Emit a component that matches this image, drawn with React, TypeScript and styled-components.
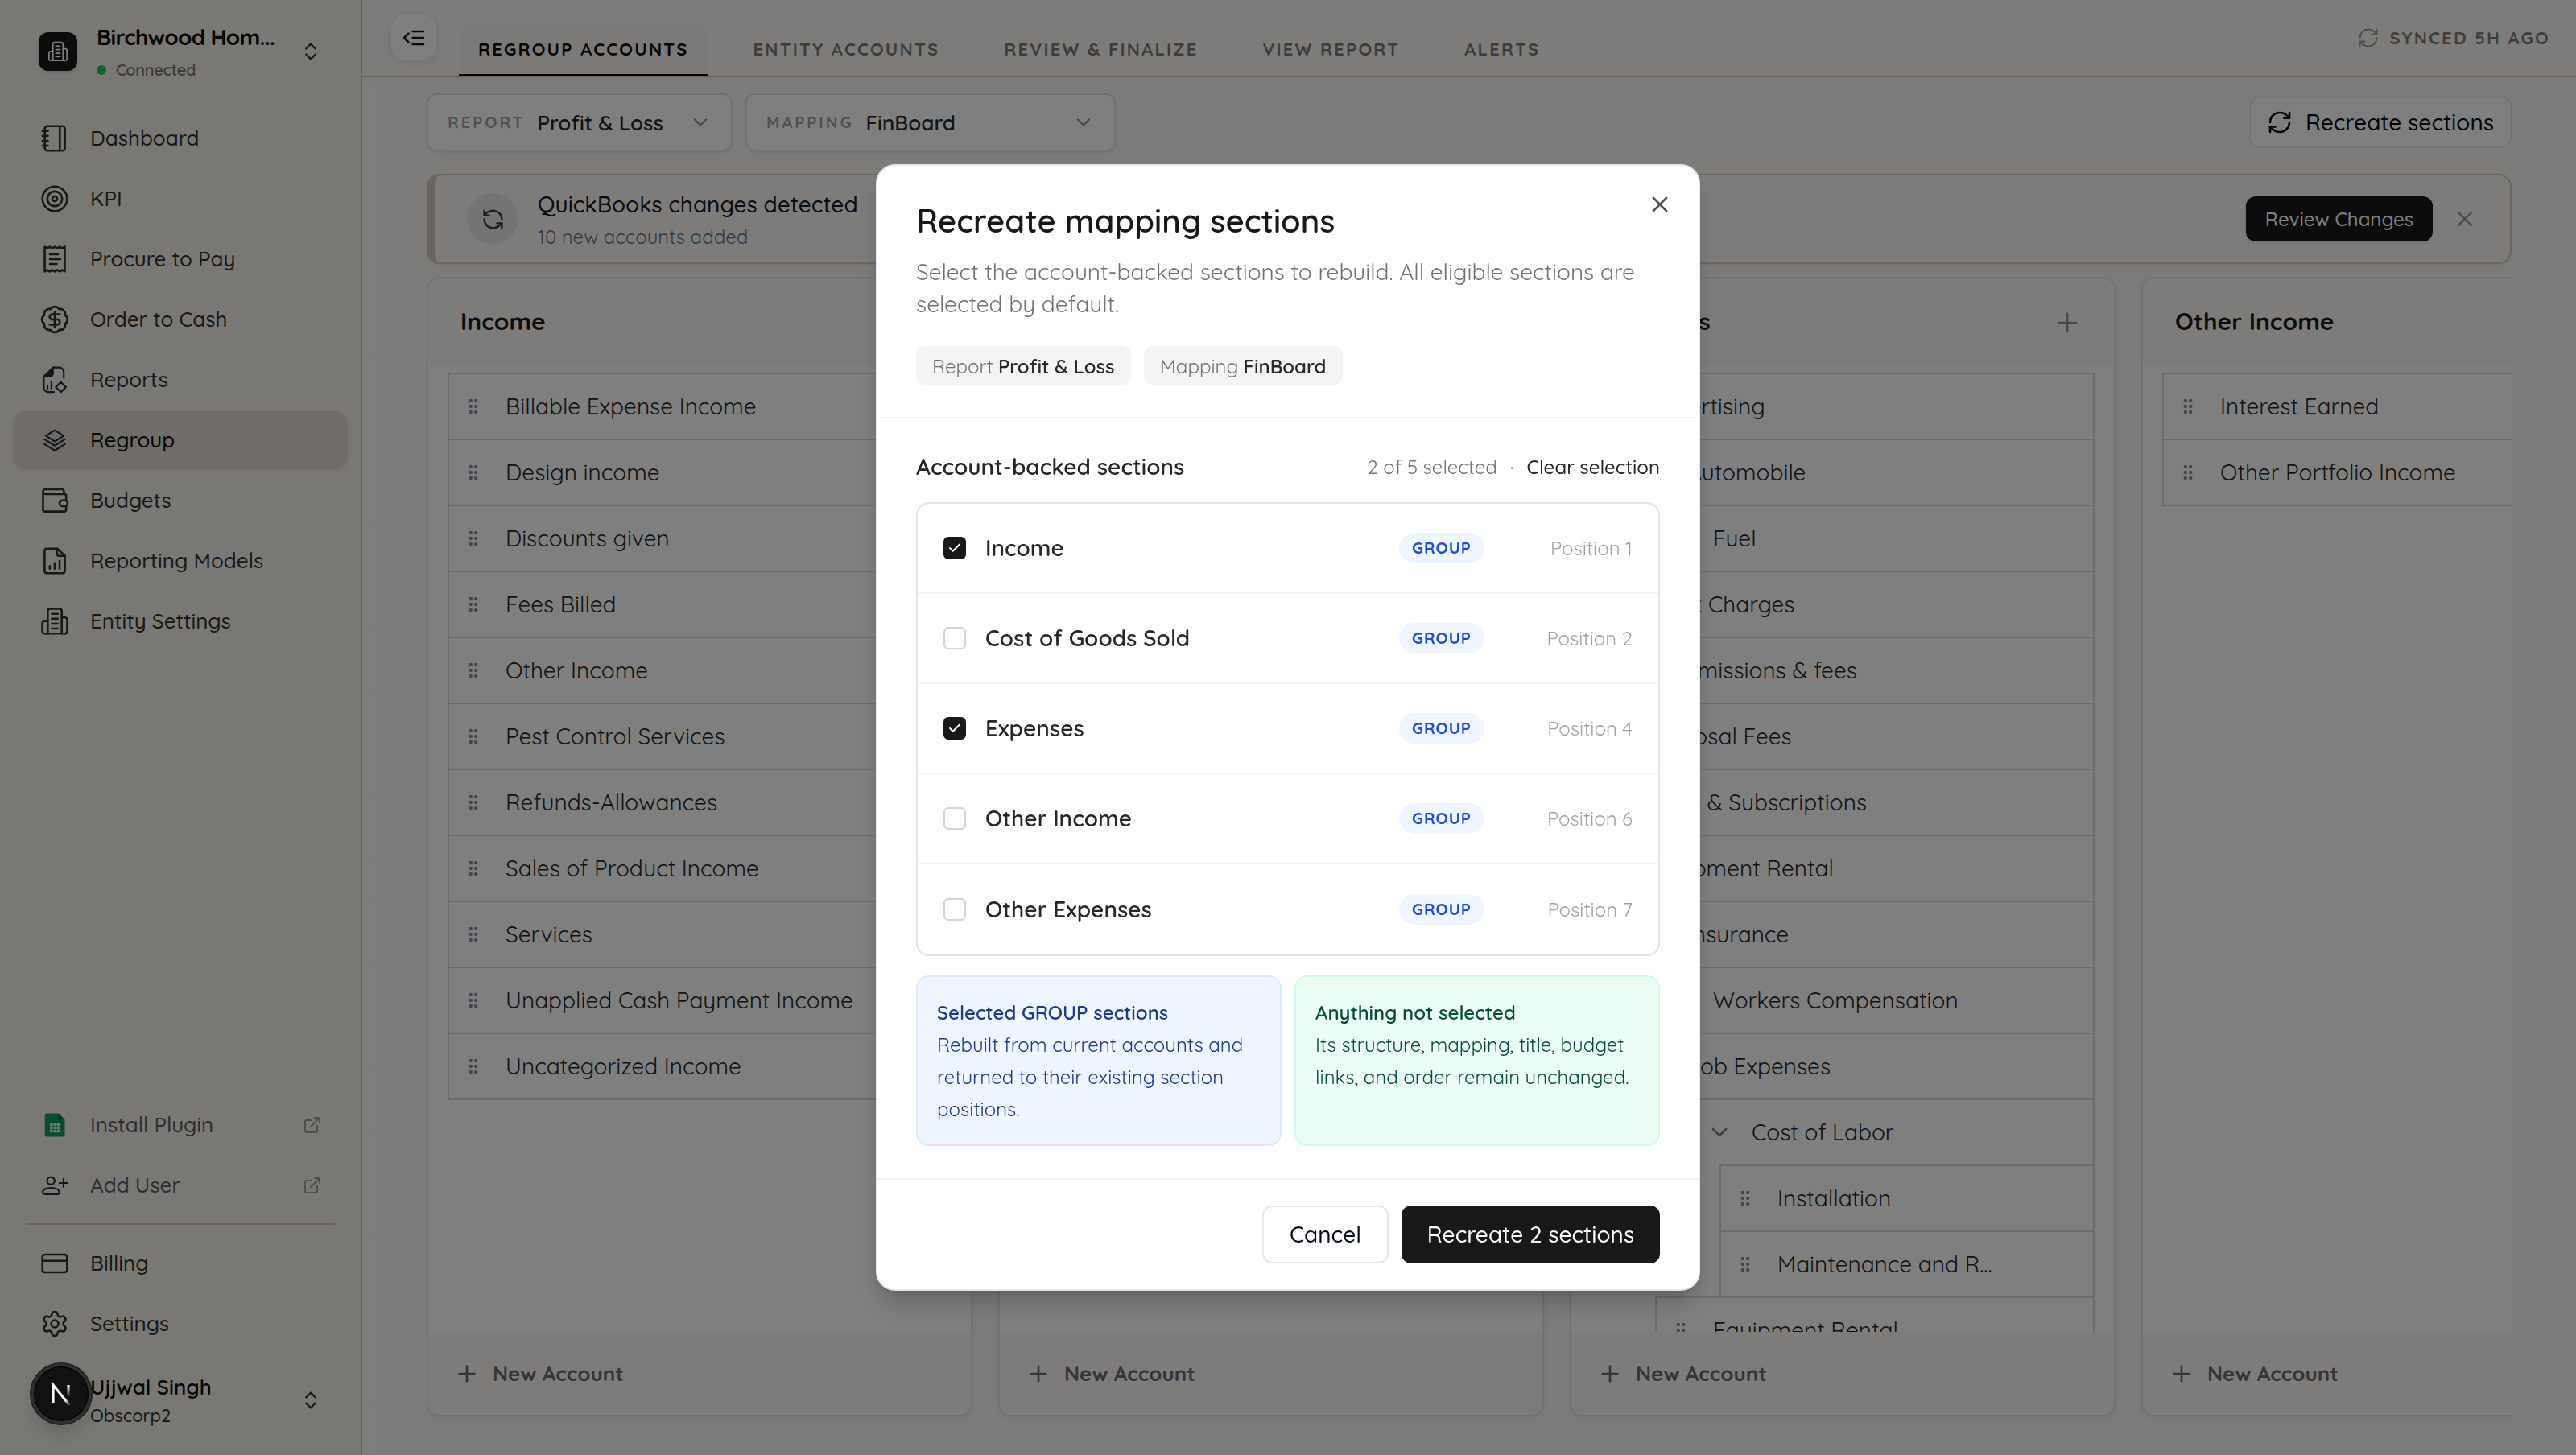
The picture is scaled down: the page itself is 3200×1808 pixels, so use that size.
import React from "react";
import styled, { createGlobalStyle, css } from "styled-components";
import {
  BadgeDollarSign,
  Check,
  ChevronDown,
  ChevronsUpDown,
  ExternalLink,
  Plus,
  RefreshCcw,
  RefreshCw,
  Settings,
  X,
} from "lucide-react";

const GlobalStyle = createGlobalStyle`
  * { box-sizing: border-box; }
  html, body { margin: 0; padding: 0; }
  body {
    width: 3200px;
    height: 1808px;
    overflow: hidden;
    background: #fbf8f3;
    font-family: Quicksand, Lato, "Open Sans", sans-serif;
    color: #27272a;
    -webkit-font-smoothing: antialiased;
  }
  button { font: inherit; border: 0; background: none; padding: 0; color: inherit; }
  svg { display: block; flex: none; }
`;

/* ---------- text ---------- */

type TextProps = {
  $size: number;
  $weight?: number;
  $color?: string;
  $lh?: number;
  $track?: number;
  $drop?: number;
};

const Text = styled.span<TextProps>`
  display: block;
  flex: none;
  white-space: pre;
  font-size: ${(p) => p.$size}px;
  font-weight: ${(p) => p.$weight ?? 400};
  letter-spacing: ${(p) => p.$track ?? 0}em;
  line-height: ${(p) => p.$lh ?? Math.round(p.$size * 0.65) * 2}px;
  padding-top: ${(p) => p.$drop ?? 0}px;
  color: ${(p) => p.$color ?? "inherit"};
`;

/* ---------- icons ---------- */

const Line = styled.svg.attrs({ viewBox: "0 0 24 24", fill: "none", width: 36, height: 36 })`
  stroke: currentColor;
  stroke-width: 1.75;
  stroke-linecap: round;
  stroke-linejoin: round;
`;
const ThinLine = styled(Line)`
  stroke-width: 1.45;
  color: #2b2b3a;
`;

const NotebookIcon = () => (
  <Line>
    <rect x="3.8" y="1.8" width="16.6" height="20.4" rx="2" />
    <path d="M16.2 2v20M1.9 5.8h4.4M1.9 9.9h4.4M1.9 14h4.4M1.9 18h4.4" />
  </Line>
);
const TargetIcon = () => (
  <Line>
    <circle cx="12" cy="12" r="10.2" />
    <circle cx="12" cy="12" r="6.1" />
    <circle cx="12" cy="12" r="2" />
  </Line>
);
const ReceiptIcon = () => (
  <Line>
    <path d="M3.7 1.8l2 1.2 2.1-1.2L9.9 3 12 1.8 14.1 3l2.1-1.2 2.1 1.2 2-1.2v20.4l-2-1.2-2.1 1.2-2.1-1.2-2.1 1.2L9.9 21l-2.1 1.2L5.7 21l-2 1.2z" />
    <path d="M8 8h6.6M8 12h8.6M8 16h5.6" />
  </Line>
);
const ReportsIcon = () => (
  <ThinLine>
    <path d="M2.9 9.3v9.2a3.6 3.6 0 0 0 3.6 3.6h4.8M10.5 1.8h5.2a3.8 3.8 0 0 1 3.8 3.8v4.8" />
    <path d="M2.9 9.3 10.5 1.8v5a2.5 2.5 0 0 1-2.5 2.5z" fill="currentColor" />
    <path d="M6 16.6v2.8M9.3 13.6v5.8M17.1 13.8l4.2 4.2-4.2 4.2-4.2-4.2z" />
  </ThinLine>
);
const LayersIcon = () => (
  <ThinLine>
    <path d="M12 3.8 19.4 8.4 12 13 4.6 8.4z" />
    <path d="M3.5 11.2 12 16.5l8.5-5.3M3.5 15.2 12 20.5l8.5-5.3" />
  </ThinLine>
);
const WalletIcon = () => (
  <Line>
    <path d="M19.6 6.6V4.4a1.7 1.7 0 0 0-1.7-1.7H4.3a1.9 1.9 0 0 0 0 3.9h15.6a1.5 1.5 0 0 1 1.5 1.5v3.7M21.4 16.6v3a1.5 1.5 0 0 1-1.5 1.5H3.8a1.5 1.5 0 0 1-1.5-1.5V4.8" />
    <rect x="16" y="11.8" width="6.6" height="4.8" rx="2.2" />
  </Line>
);
const ModelIcon = () => (
  <Line>
    <path d="M14.2 1.8H5.4a1.8 1.8 0 0 0-1.8 1.8v16.8a1.8 1.8 0 0 0 1.8 1.8h13.2a1.8 1.8 0 0 0 1.8-1.8V7.8z" />
    <path d="M14 2v4.3a1.5 1.5 0 0 0 1.5 1.5h4.7M7.9 16.2v2.3M12 13.8v4.7M16 12v6.5" />
  </Line>
);
const BuildingIcon = () => (
  <Line>
    <path d="M6.2 22.2V3.5a1.9 1.9 0 0 1 1.9-1.9h7.8a1.9 1.9 0 0 1 1.9 1.9v18.7" />
    <path d="M6.2 11.8H3.6a1.9 1.9 0 0 0-1.9 1.9v6.6a1.9 1.9 0 0 0 1.9 1.9h16.8a1.9 1.9 0 0 0 1.9-1.9v-9.6a1.9 1.9 0 0 0-1.9-1.9h-2.6" />
    <path d="M9.6 5.8h4.8M9.6 9.9h4.8M9.6 14h4.8M9.6 18h4.8" />
  </Line>
);
const SheetsIcon = () => (
  <svg width="36" height="36" viewBox="0 0 36 36">
    <path d="M8 3.4h14.5l8 8V30a2.4 2.4 0 0 1-2.4 2.4H8A2.4 2.4 0 0 1 5.6 30V5.8A2.4 2.4 0 0 1 8 3.4z" fill="#0f9d58" />
    <path d="M22.5 3.4l8 8h-8z" fill="#0b6b3d" />
    <path d="M12.2 15.8h12v11.4h-12z" fill="#f1f1f1" />
    <path d="M12.2 19.6h12M12.2 23.4h12M16.2 15.8v11.4M20.2 15.8v11.4" stroke="#0f9d58" strokeWidth=".8" />
  </svg>
);
const AddUserIcon = () => (
  <ThinLine>
    <circle cx="8.8" cy="8.2" r="3.1" />
    <path d="M2 17.6c0-2.3 3-3.6 6.9-3.6s6.9 1.3 6.9 3.6c0 .9-.6 1.6-1.6 1.6H3.6c-1 0-1.6-.7-1.6-1.6zM19.3 6.6v6.8M15.9 10h6.8" />
  </ThinLine>
);
const CardIcon = () => (
  <Line>
    <rect x="1.8" y="4.7" width="20.4" height="14.6" rx="2" />
    <path d="M1.8 9.8h20.4" />
  </Line>
);
const CollapseIcon = () => (
  <svg width="32" height="32" viewBox="0 0 24 24" fill="none" stroke="currentColor" strokeWidth="2" strokeLinecap="round" strokeLinejoin="round">
    <path d="M21 6H11M21 12H11M21 18H11M7 8l-4 4 4 4" />
  </svg>
);
const DragDots = () => (
  <svg width="12" height="20" viewBox="0 0 12 20" fill="#8290a0">
    {[3, 10, 17].map((y) => (
      <React.Fragment key={y}>
        <circle cx="2.8" cy={y} r="2.2" />
        <circle cx="9.2" cy={y} r="2.2" />
      </React.Fragment>
    ))}
  </svg>
);

/* ---------- sidebar ---------- */

const Page = styled.div`
  display: flex;
  width: 3200px;
  height: 1808px;
`;
const Sidebar = styled.aside`
  display: flex;
  flex-direction: column;
  width: 450px;
  flex: none;
  background: #f4f0e8;
  border-right: 2px solid #cfcbc3;
`;
const Brand = styled.div`
  display: flex;
  align-items: flex-start;
  height: 136px;
  padding: 28px 48px 0;
`;
const BrandMark = styled.div`
  display: flex;
  align-items: center;
  justify-content: center;
  width: 48px;
  height: 48px;
  margin: 12px 24px 0 0;
  border-radius: 12px;
  background: #18181b;
  color: #fff;
  box-shadow: 0 2px 4px rgba(0, 0, 0, 0.15);
  svg { width: 26px; height: 26px; stroke-width: 1.6; }
`;
const BrandText = styled.div`
  display: flex;
  flex-direction: column;
  align-items: flex-start;
  gap: 9px;
  flex: 1;
`;
const Status = styled.div`
  display: flex;
  align-items: center;
  gap: 12px;
  height: 28px;
  &::before {
    content: "";
    width: 12px;
    height: 12px;
    border-radius: 50%;
    background: #22c55e;
  }
`;
const BrandToggle = styled.div`
  margin: 22px 0 0;
  color: #34342f;
`;
const Nav = styled.nav`
  display: flex;
  flex-direction: column;
  gap: 3px;
  padding: 0 16px;
`;
const NavRow = styled.a<{ $active?: boolean; $tone?: string }>`
  display: flex;
  align-items: center;
  height: 72px;
  padding: 0 34px;
  gap: 26px;
  border-radius: 16px;
  color: ${(p) => p.$tone ?? "#30302c"};
  ${(p) =>
    p.$active &&
    css`
      background: #e1d9d1;
      box-shadow: 0 2px 4px rgba(0, 0, 0, 0.06);
    `}
`;
const IconSlot = styled.span`
  display: flex;
  align-items: center;
  justify-content: center;
  width: 36px;
  height: 36px;
  flex: none;
`;
const Trailing = styled.span`
  margin-left: auto;
  margin-right: -2px;
  color: #a09e98;
`;
const Spacer = styled.div`
  flex: 1;
`;
const Rule = styled.div`
  height: 2px;
  margin: 11px 32px 12px;
  background: #d2cdc0;
`;
const User = styled.div`
  display: flex;
  align-items: flex-start;
  height: 127px;
  padding: 25px 48px 0 112px;
`;
const UserText = styled.div`
  display: flex;
  flex-direction: column;
  align-items: flex-start;
  gap: 2px;
  flex: 1;
`;
const UserToggle = styled.div`
  margin-top: 20px;
  color: #34342f;
`;

type NavItem = { label: string; icon: React.ReactNode; active?: boolean };
const navItems: NavItem[] = [
  { label: "Dashboard", icon: <NotebookIcon /> },
  { label: "KPI", icon: <TargetIcon /> },
  { label: "Procure to Pay", icon: <ReceiptIcon /> },
  { label: "Order to Cash", icon: <BadgeDollarSign size={38} strokeWidth={1.7} /> },
  { label: "Reports", icon: <ReportsIcon /> },
  { label: "Regroup", icon: <LayersIcon />, active: true },
  { label: "Budgets", icon: <WalletIcon /> },
  { label: "Reporting Models", icon: <ModelIcon /> },
  { label: "Entity Settings", icon: <BuildingIcon /> },
];

function SideBar() {
  return (
    <Sidebar>
      <Brand>
        <BrandMark>
          <BuildingIcon />
        </BrandMark>
        <BrandText>
          <Text $size={28} $weight={700} $lh={36} $track={-0.028} $color="#0c0a09">Birchwood Hom...</Text>
          <Status>
            <Text $size={20} $weight={600} $lh={28} $track={-0.018} $color="#7c7972">Connected</Text>
          </Status>
        </BrandText>
        <BrandToggle>
          <ChevronsUpDown size={28} strokeWidth={2} />
        </BrandToggle>
      </Brand>
      <Nav>
        {navItems.map((n) => (
          <NavRow key={n.label} $active={n.active}>
            <IconSlot>{n.icon}</IconSlot>
            <Text $size={26} $weight={500} $color={n.active ? "#0c0a09" : undefined}>
              {n.label}
            </Text>
          </NavRow>
        ))}
      </Nav>
      <Spacer />
      <Nav>
        <NavRow $tone="#5b5b64">
          <IconSlot><SheetsIcon /></IconSlot>
          <Text $size={26} $weight={500}>Install Plugin</Text>
          <Trailing><ExternalLink size={24} strokeWidth={2} /></Trailing>
        </NavRow>
        <NavRow $tone="#5b5b64">
          <IconSlot><AddUserIcon /></IconSlot>
          <Text $size={26} $weight={500}>Add User</Text>
          <Trailing><ExternalLink size={24} strokeWidth={2} /></Trailing>
        </NavRow>
      </Nav>
      <Rule />
      <Nav>
        <NavRow>
          <IconSlot><CardIcon /></IconSlot>
          <Text $size={26} $weight={500}>Billing</Text>
        </NavRow>
        <NavRow>
          <IconSlot><Settings size={36} strokeWidth={1.75} /></IconSlot>
          <Text $size={26} $weight={500}>Settings</Text>
        </NavRow>
      </Nav>
      <User>
        <UserText>
          <Text $size={26} $weight={600} $lh={36} $color="#0c0a09">Ujjwal Singh</Text>
          <Text $size={22} $weight={500} $lh={30} $color="#30302c">Obscorp2</Text>
        </UserText>
        <UserToggle>
          <ChevronsUpDown size={28} strokeWidth={2} />
        </UserToggle>
      </User>
    </Sidebar>
  );
}

/* ---------- header ---------- */

const Main = styled.main`
  display: flex;
  flex-direction: column;
  width: 2750px;
  background: linear-gradient(90deg, #fafaf7 0, #fbf8f4 120px);
`;
const Header = styled.header`
  display: flex;
  align-items: flex-end;
  height: 96px;
  flex: none;
  padding: 0 32px 0 34px;
  background: #fcf9f4;
  border-bottom: 2px solid #d2cdc0;
  box-shadow: 0 4px 12px rgba(0, 0, 0, 0.04);
`;
const CollapseButton = styled.button`
  display: flex;
  align-items: center;
  justify-content: center;
  align-self: flex-start;
  width: 60px;
  height: 61px;
  margin: 16px 26px 0 0;
  border: 2px solid #f1f1f3;
  border-radius: 20px;
  background: #fff;
  color: #18181b;
  box-shadow: 0 2px 6px rgba(0, 0, 0, 0.08);
`;
const Tabs = styled.div`
  display: flex;
  gap: 32px;
  flex: 1;
`;
const Tab = styled.a<{ $active?: boolean }>`
  display: flex;
  align-items: center;
  height: 65px;
  padding: 0 24px 2px;
  border-radius: 16px 16px 0 0;
  ${(p) =>
    p.$active &&
    css`
      background: linear-gradient(#0c0a09, #0c0a09) bottom / 100% 2px no-repeat, #f8f5f1;
    `}
`;
const Sync = styled.div`
  display: flex;
  align-items: center;
  align-self: flex-start;
  gap: 12px;
  height: 94px;
  color: #a09e99;
`;

const tabs = ["REGROUP ACCOUNTS", "ENTITY ACCOUNTS", "REVIEW & FINALIZE", "VIEW REPORT", "ALERTS"];

/* ---------- toolbar and banner ---------- */

const Content = styled.div`
  display: flex;
  flex-direction: column;
  width: 2670px;
  padding: 20px 0 0 80px;
`;
const Toolbar = styled.div`
  display: flex;
  align-items: center;
  gap: 16px;
  height: 72px;
`;
const Select = styled.div<{ $w: number }>`
  display: flex;
  align-items: center;
  width: ${(p) => p.$w}px;
  height: 72px;
  padding: 0 24px;
  gap: 15px;
  border: 2px solid #e4e3e5;
  border-radius: 12px;
  background: #fff;
  box-shadow: 0 2px 4px rgba(0, 0, 0, 0.07);
  > svg { margin-left: auto; color: #94949d; }
`;
const RecreateButton = styled.button`
  display: flex;
  align-items: center;
  gap: 16px;
  width: 326px;
  height: 64px;
  margin-left: auto;
  padding: 0 20px;
  border: 2px solid #e2e8f0;
  border-radius: 12px;
  background: #fff;
  color: #020817;
`;
const Banner = styled.section`
  display: flex;
  align-items: center;
  height: 112px;
  margin-top: 28px;
  padding: 0 40px;
  border: 2px solid #d2cdc0;
  border-left-width: 10px;
  border-radius: 16px;
  background: #fcf9f5;
  box-shadow: 0 2px 4px rgba(0, 0, 0, 0.06);
`;
const BannerIcon = styled.div`
  display: flex;
  align-items: center;
  justify-content: center;
  width: 64px;
  height: 64px;
  margin-right: 24px;
  border-radius: 50%;
  background: #ece9e5;
  color: #3f3f46;
`;
const BannerText = styled.div`
  display: flex;
  flex-direction: column;
  align-items: flex-start;
  gap: 3px;
  flex: 1;
  padding-top: 2px;
`;
const ReviewButton = styled.button`
  display: flex;
  align-items: center;
  justify-content: center;
  width: 232px;
  height: 56px;
  margin-right: 24px;
  border-radius: 12px;
  background: #18181b;
  color: #fff;
  box-shadow: 0 2px 4px rgba(0, 0, 0, 0.1);
`;

/* ---------- board ---------- */

const Board = styled.div`
  display: flex;
  gap: 32px;
  height: 1464px;
  margin-top: 16px;
  overflow: hidden;
`;
const Column = styled.section`
  display: flex;
  flex-direction: column;
  width: 678px;
  height: 1416px;
  flex: none;
  border: 2px solid #e7e4e0;
  border-radius: 16px;
  background: #fff;
  overflow: hidden;
  box-shadow: 0 2px 6px rgba(0, 0, 0, 0.07);
`;
const ColumnHead = styled.div`
  display: flex;
  align-items: center;
  justify-content: space-between;
  height: 109px;
  flex: none;
  padding: 0 39px 0 40px;
  background: #fcf9f5;
  color: #8f8f98;
`;
const ColumnTitle = styled.h2`
  margin: 0;
  padding-bottom: 3px;
  font-size: 30px;
  font-weight: 700;
  line-height: 38px;
  color: #18181b;
`;
const ColumnBody = styled.div`
  display: flex;
  flex-direction: column;
  flex: 1;
  min-height: 0;
  overflow: hidden;
  padding: 8px 24px 0;
`;
const ColumnFoot = styled.div`
  display: flex;
  align-items: center;
  gap: 16px;
  height: 103px;
  flex: none;
  padding: 0 32px;
  background: #fcf9f5;
  color: #6a6a73;
`;
const AccountRow = styled.div<{ $level: number; $parent?: boolean }>`
  display: flex;
  align-items: center;
  flex: none;
  height: 82px;
  margin-left: ${(p) => p.$level * 80}px;
  padding-left: ${(p) => (p.$parent ? 62 : 24)}px;
  gap: ${(p) => (p.$parent ? 24 : 34)}px;
  border: 2px solid #d8d8d9;
  border-bottom: 0;
  color: #27272a;
  > svg { color: #768493; }
  &:last-child { border-bottom: 2px solid #d8d8d9; height: 84px; }
`;

type Account = { name: string; level?: number; parent?: boolean };
type ColumnData = { title: string; accounts: Account[] };

const columns: ColumnData[] = [
  {
    title: "Income",
    accounts: [
      { name: "Billable Expense Income" },
      { name: "Design income" },
      { name: "Discounts given" },
      { name: "Fees Billed" },
      { name: "Other Income" },
      { name: "Pest Control Services" },
      { name: "Refunds-Allowances" },
      { name: "Sales of Product Income" },
      { name: "Services" },
      { name: "Unapplied Cash Payment Income" },
      { name: "Uncategorized Income" },
    ],
  },
  { title: "Cost of Goods Sold", accounts: [] },
  {
    title: "Expenses",
    accounts: [
      { name: "Advertising" },
      { name: "Automobile", parent: true },
      { name: "Fuel", level: 1 },
      { name: "Bank Charges" },
      { name: "Commissions & fees" },
      { name: "Disposal Fees" },
      { name: "Dues & Subscriptions" },
      { name: "Equipment Rental" },
      { name: "Insurance", parent: true },
      { name: "Workers Compensation", level: 1 },
      { name: "Job Expenses", parent: true },
      { name: "Cost of Labor", level: 1, parent: true },
      { name: "Installation", level: 2 },
      { name: "Maintenance and R...", level: 2 },
      { name: "Equipment Rental", level: 1 },
    ],
  },
  {
    title: "Other Income",
    accounts: [{ name: "Interest Earned" }, { name: "Other Portfolio Income" }],
  },
];

function BoardColumn({ data }: { data: ColumnData }) {
  return (
    <Column>
      <ColumnHead>
        <ColumnTitle>{data.title}</ColumnTitle>
        <Plus size={38} strokeWidth={1.7} />
      </ColumnHead>
      <ColumnBody>
        {data.accounts.map((a, i) => (
          <AccountRow key={i} $level={a.level ?? 0} $parent={a.parent}>
            {a.parent ? <ChevronDown size={32} strokeWidth={2} /> : <DragDots />}
            <Text $size={28} $weight={400}>{a.name}</Text>
          </AccountRow>
        ))}
      </ColumnBody>
      <ColumnFoot>
        <Plus size={32} strokeWidth={2} />
        <Text $size={26} $weight={700}>New Account</Text>
      </ColumnFoot>
    </Column>
  );
}

/* ---------- dialog ---------- */

const Overlay = styled.div`
  position: fixed;
  inset: 0;
  display: flex;
  align-items: center;
  justify-content: center;
  background: rgba(0, 0, 0, 0.5);
`;
const Dialog = styled.section`
  position: relative;
  display: flex;
  flex-direction: column;
  width: 1024px;
  height: 1400px;
  border: 2px solid #e2e8f0;
  border-radius: 24px;
  background: #fff;
  box-shadow: 0 20px 30px -6px rgba(0, 0, 0, 0.2), 0 8px 12px -8px rgba(0, 0, 0, 0.2);
`;
const CloseButton = styled.button`
  position: absolute;
  top: 32px;
  right: 32px;
  color: #52525b;
`;
const DialogHead = styled.div`
  display: flex;
  flex-direction: column;
  align-items: flex-start;
  height: 314px;
  padding: 44px 48px 0;
  border-bottom: 2px solid #f4f4f5;
`;
const Description = styled.p`
  margin: 20px 0 0;
  font-size: 28px;
  line-height: 40px;
  color: #71717a;
`;
const Chips = styled.div`
  display: flex;
  gap: 16px;
  margin-top: 32px;
`;
const Chip = styled.div<{ $w: number }>`
  display: flex;
  align-items: center;
  gap: 6px;
  width: ${(p) => p.$w}px;
  height: 48px;
  padding-left: 20px;
  border-radius: 10px;
  background: #f4f4f5;
`;
const DialogBody = styled.div`
  display: flex;
  flex-direction: column;
  padding: 40px 48px;
`;
const BodyHead = styled.div`
  display: flex;
  align-items: center;
  height: 40px;
  margin-bottom: 24px;
`;
const HeadMeta = styled.div`
  display: flex;
  align-items: center;
  gap: 16px;
  margin-left: auto;
`;
const SectionList = styled.div`
  display: flex;
  flex-direction: column;
  height: 564px;
  border: 2px solid #e4e4e7;
  border-radius: 16px;
`;
const SectionRow = styled.label`
  display: flex;
  align-items: center;
  height: 112px;
  padding: 0 32px;
  border-bottom: 2px solid #f4f4f5;
  &:last-child { border-bottom: 0; }
`;
const Checkbox = styled.span<{ $on: boolean }>`
  display: flex;
  align-items: center;
  justify-content: center;
  width: 28px;
  height: 28px;
  margin-right: 24px;
  border: 2px solid ${(p) => (p.$on ? "#18181b" : "#d4d4d8")};
  border-radius: 6px;
  background: ${(p) => (p.$on ? "#18181b" : "#fff")};
  color: #fff;
`;
const GroupBadge = styled.span`
  display: flex;
  align-items: center;
  justify-content: center;
  width: 106px;
  height: 38px;
  margin-left: auto;
  border-radius: 19px;
  background: #eff6ff;
`;
const Position = styled.span`
  display: flex;
  justify-content: flex-end;
  width: 184px;
`;
const Notes = styled.div`
  display: grid;
  grid-template-columns: 1fr 1fr;
  gap: 16px;
  margin-top: 24px;
`;
const Note = styled.div<{ $tone: "blue" | "green" }>`
  height: 212px;
  padding: 24px;
  border: 2px solid ${(p) => (p.$tone === "blue" ? "#dbeafe" : "#d1fae5")};
  border-radius: 16px;
  background: ${(p) => (p.$tone === "blue" ? "#eff6ff" : "#ecfdf5")};
  color: ${(p) => (p.$tone === "blue" ? "#1e3a8a" : "#064e3b")};
  font-size: 24px;
  line-height: 40px;
`;
const NoteTitle = styled.div`
  font-weight: 600;
`;
const DialogFoot = styled.div`
  display: flex;
  justify-content: flex-end;
  gap: 16px;
  padding: 32px 48px;
  border-top: 2px solid #f4f4f5;
`;
const Action = styled.button<{ $primary?: boolean }>`
  display: flex;
  align-items: center;
  justify-content: center;
  width: ${(p) => (p.$primary ? 321 : 157)}px;
  height: 72px;
  border: 2px solid ${(p) => (p.$primary ? "#18181b" : "#e2e8f0")};
  border-radius: 12px;
  background: ${(p) => (p.$primary ? "#18181b" : "#fff")};
  color: ${(p) => (p.$primary ? "#fff" : "#020817")};
`;

const sections = [
  { name: "Income", on: true, pos: 1 },
  { name: "Cost of Goods Sold", on: false, pos: 2 },
  { name: "Expenses", on: true, pos: 4 },
  { name: "Other Income", on: false, pos: 6 },
  { name: "Other Expenses", on: false, pos: 7 },
];

function RecreateDialog() {
  return (
    <Overlay>
      <Dialog>
        <CloseButton><X size={32} strokeWidth={2} /></CloseButton>
        <DialogHead>
          <Text $size={40} $weight={600} $lh={48} $color="#18181b">Recreate mapping sections</Text>
          <Description>
            Select the account-backed sections to rebuild. All eligible sections are
            <br />
            selected by default.
          </Description>
          <Chips>
            <Chip $w={267}>
              <Text $size={24} $weight={400} $drop={1} $color="#71717a">Report</Text>
              <Text $size={24} $weight={600} $drop={1} $color="#27272a">Profit &amp; Loss</Text>
            </Chip>
            <Chip $w={247}>
              <Text $size={24} $weight={400} $drop={1} $color="#71717a">Mapping</Text>
              <Text $size={24} $weight={600} $drop={1} $color="#27272a">FinBoard</Text>
            </Chip>
          </Chips>
        </DialogHead>
        <DialogBody>
          <BodyHead>
            <Text $size={28} $weight={600} $color="#27272a">Account-backed sections</Text>
            <HeadMeta>
              <Text $size={24} $color="#71717a">2 of 5 selected</Text>
              <Text $size={24} $color="#71717a">·</Text>
              <Text $size={24} $weight={500} $color="#27272a">Clear selection</Text>
            </HeadMeta>
          </BodyHead>
          <SectionList>
            {sections.map((s) => (
              <SectionRow key={s.name}>
                <Checkbox $on={s.on}>{s.on && <Check size={18} strokeWidth={2.6} />}</Checkbox>
                <Text $size={28} $weight={600} $color="#27272a">{s.name}</Text>
                <GroupBadge>
                  <Text $size={20} $weight={700} $track={0.05} $color="#1d4ed8">GROUP</Text>
                </GroupBadge>
                <Position>
                  <Text $size={24} $color="#a1a1aa">{`Position ${s.pos}`}</Text>
                </Position>
              </SectionRow>
            ))}
          </SectionList>
          <Notes>
            <Note $tone="blue">
              <NoteTitle>Selected GROUP sections</NoteTitle>
              Rebuilt from current accounts and returned to their existing section positions.
            </Note>
            <Note $tone="green">
              <NoteTitle>Anything not selected</NoteTitle>
              Its structure, mapping, title, budget links, and order remain unchanged.
            </Note>
          </Notes>
        </DialogBody>
        <DialogFoot>
          <Action>
            <Text $size={28} $weight={500}>Cancel</Text>
          </Action>
          <Action $primary>
            <Text $size={28} $weight={500}>Recreate 2 sections</Text>
          </Action>
        </DialogFoot>
      </Dialog>
    </Overlay>
  );
}

/* ---------- dev badge ---------- */

const DevBadge = styled.div`
  position: fixed;
  left: 38px;
  top: 1694px;
  display: flex;
  align-items: center;
  justify-content: center;
  width: 76px;
  height: 76px;
  border: 4px solid #2e2e2e;
  border-radius: 50%;
  background: #111;
  box-shadow: inset 0 0 0 1px #000, 0 0 0 1px #171717, 0 16px 32px -8px rgba(0, 0, 0, 0.2);
`;

export default function App() {
  return (
    <>
      <GlobalStyle />
      <Page>
        <SideBar />
        <Main>
          <Header>
            <CollapseButton><CollapseIcon /></CollapseButton>
            <Tabs>
              {tabs.map((t, i) => (
                <Tab key={t} $active={i === 0}>
                  <Text $size={22} $weight={700} $track={0.1} $color={i === 0 ? "#0c0a09" : "#7a7872"}>
                    {t}
                  </Text>
                </Tab>
              ))}
            </Tabs>
            <Sync>
              <RefreshCw size={28} strokeWidth={1.8} />
              <Text $size={22} $weight={700} $track={0.1} $color="#7f7d76">SYNCED 5H AGO</Text>
            </Sync>
          </Header>
          <Content>
            <Toolbar>
              <Select $w={380}>
                <Text $size={20} $weight={700} $track={0.15} $color="#a1a1aa">REPORT</Text>
                <Text $size={26} $weight={600} $drop={1} $color="#27272a">Profit &amp; Loss</Text>
                <ChevronDown size={28} strokeWidth={2} />
              </Select>
              <Select $w={460}>
                <Text $size={20} $weight={700} $track={0.15} $color="#a1a1aa">MAPPING</Text>
                <Text $size={26} $weight={600} $drop={1} $color="#27272a">FinBoard</Text>
                <ChevronDown size={28} strokeWidth={2} />
              </Select>
              <RecreateButton>
                <RefreshCw size={32} strokeWidth={2} />
                <Text $size={28} $weight={500}>Recreate sections</Text>
              </RecreateButton>
            </Toolbar>
            <Banner>
              <BannerIcon><RefreshCcw size={29} strokeWidth={2} /></BannerIcon>
              <BannerText>
                <Text $size={28} $weight={500} $lh={38} $color="#0f172a">QuickBooks changes detected</Text>
                <Text $size={24} $lh={36} $color="#64748b">10 new accounts added</Text>
              </BannerText>
              <ReviewButton>
                <Text $size={24} $weight={500}>Review Changes</Text>
              </ReviewButton>
              <X size={32} strokeWidth={2} color="#94a3b8" />
            </Banner>
            <Board>
              {columns.map((c) => (
                <BoardColumn key={c.title} data={c} />
              ))}
            </Board>
          </Content>
        </Main>
      </Page>
      <RecreateDialog />
      <DevBadge>
        <svg width="28" height="30" viewBox="0 0 28 30" fill="none">
          <defs>
            <linearGradient id="diag" x1="4" y1="4" x2="26" y2="29" gradientUnits="userSpaceOnUse">
              <stop offset=".72" stopColor="#fff" />
              <stop offset="1" stopColor="#fff" stopOpacity="0" />
            </linearGradient>
            <linearGradient id="stem" x1="0" y1="4" x2="0" y2="19" gradientUnits="userSpaceOnUse">
              <stop stopColor="#fff" />
              <stop offset="1" stopColor="#fff" stopOpacity="0" />
            </linearGradient>
          </defs>
          <path d="M4 26V4L25 30" stroke="url(#diag)" strokeWidth="3.2" />
          <path d="M23 4v15" stroke="url(#stem)" strokeWidth="3.2" />
        </svg>
      </DevBadge>
    </>
  );
}
